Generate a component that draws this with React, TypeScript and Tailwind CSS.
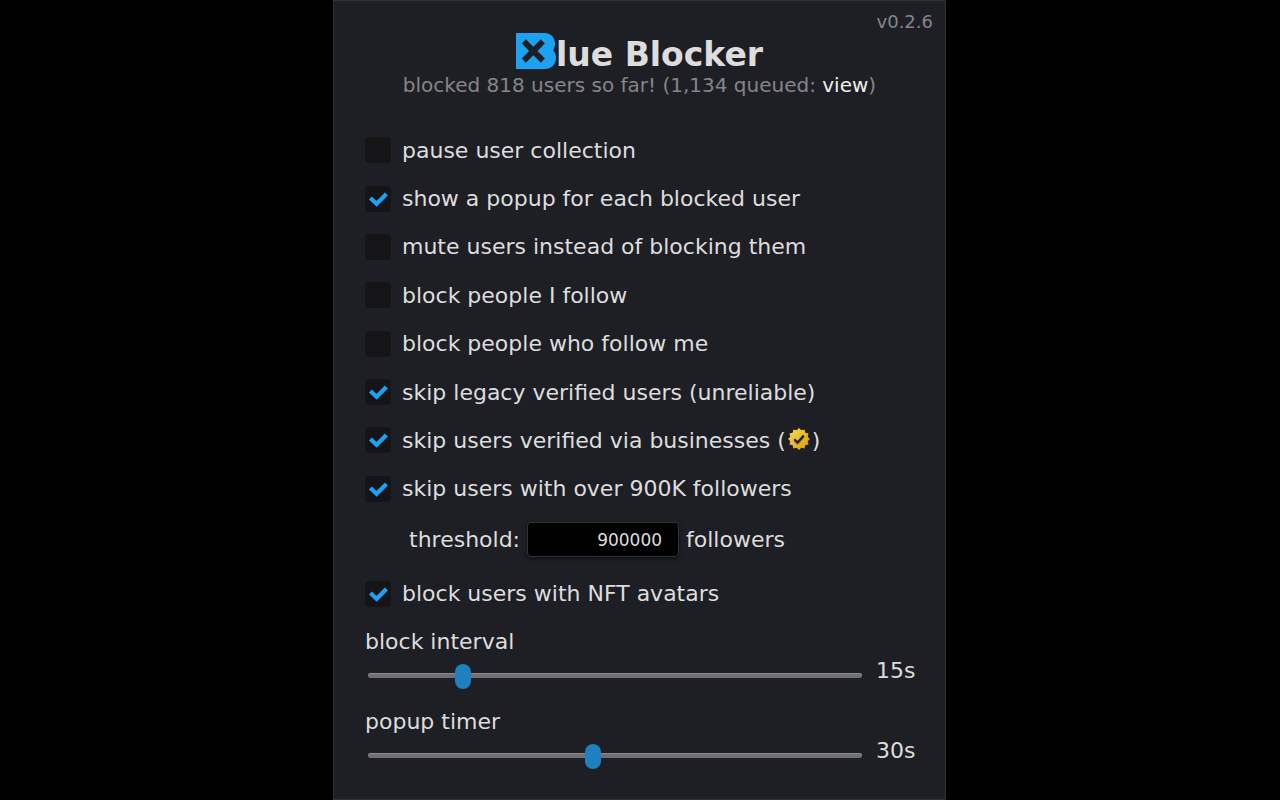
import { useState } from "react";
import type { ReactNode } from "react";

function Logo() {
  return (
    <svg width="40" height="36" viewBox="0 0 41 36" preserveAspectRatio="none" aria-hidden="true" className="shrink-0">
      <path
        d="M0 0H29C35.5 0 40 4.5 40 10.5C40 13 39.4 15.2 38 17.3C40 19 41 21.6 41 24.7C41 31.5 36 36 29.5 36H0Z"
        fill="#1da1f2"
      />
      <path d="M8 8.4L27.5 27.6M27.5 8.4L8 27.6" stroke="#1e1f25" strokeWidth="6" />
    </svg>
  );
}

function GoldBadge() {
  const points = Array.from({ length: 24 }, (_, i) => {
    const radius = i % 2 === 0 ? 11 : 9;
    const angle = (i * Math.PI) / 12 - Math.PI / 2;
    return `${(11 + radius * Math.cos(angle)).toFixed(2)},${(11 + radius * Math.sin(angle)).toFixed(2)}`;
  }).join(" ");
  return (
    <svg width="22" height="22" viewBox="0 0 22 22" role="img" aria-label="gold check" className="mx-0.5 mb-1.5 inline-block align-middle">
      <defs>
        <linearGradient id="gold" x1="0" y1="0" x2="1" y2="1">
          <stop offset="0" stopColor="#f4e05c" />
          <stop offset="0.5" stopColor="#e9bd28" />
          <stop offset="1" stopColor="#cf9a12" />
        </linearGradient>
      </defs>
      <polygon points={points} fill="url(#gold)" />
      <path d="M6.2 12.6L9.6 15.8L15.8 8.8" stroke="#b57c10" strokeWidth="2" fill="none" />
      <path d="M6.2 11.2L9.6 14.4L15.8 7.4" stroke="#1e1f25" strokeWidth="2.2" fill="none" />
    </svg>
  );
}

function Option({ checked = false, children }: { checked?: boolean; children: ReactNode }) {
  return (
    <label className="flex w-fit cursor-pointer items-center gap-[11px]">
      <span className="grid size-[26px] shrink-0 place-items-center">
        <input
          type="checkbox"
          defaultChecked={checked}
          className="peer col-start-1 row-start-1 size-full appearance-none rounded bg-[#151517]"
        />
        <svg
          width="20"
          height="16"
          viewBox="0 0 20 16"
          aria-hidden="true"
          className="pointer-events-none invisible col-start-1 row-start-1 peer-checked:visible"
        >
          <path d="M2.4 7L8.6 12.8L18.4 3" stroke="#1da1f2" strokeWidth="4.2" fill="none" />
        </svg>
      </span>
      <span>{children}</span>
    </label>
  );
}

function Slider({ id, label, initial }: { id: string; label: string; initial: number }) {
  const [value, setValue] = useState(initial);
  return (
    <div>
      <label htmlFor={id} className="block leading-7">
        {label}
      </label>
      <div className="flex items-start">
        <input
          id={id}
          type="range"
          min={5}
          max={60}
          value={value}
          onChange={(e) => setValue(Number(e.target.value))}
          className="mx-[3px] mt-[7px] h-[25px] min-w-0 flex-1 cursor-pointer appearance-none bg-transparent [&::-webkit-slider-runnable-track]:h-[5px] [&::-webkit-slider-runnable-track]:rounded-[3px] [&::-webkit-slider-runnable-track]:bg-[#717175] [&::-webkit-slider-runnable-track]:shadow-[inset_0_1px_0_#8b8b8f] [&::-webkit-slider-thumb]:-mt-[9px] [&::-webkit-slider-thumb]:h-[25px] [&::-webkit-slider-thumb]:w-4 [&::-webkit-slider-thumb]:appearance-none [&::-webkit-slider-thumb]:rounded-lg [&::-webkit-slider-thumb]:bg-[#1f80bf]"
        />
        <output htmlFor={id} className="ml-[11px] w-[41px] leading-[30px]">
          {value}s
        </output>
      </div>
    </div>
  );
}

export default function App() {
  return (
    <div className="flex min-h-screen justify-center bg-black pr-px font-['DejaVu_Sans',sans-serif] text-[22px] text-[#dddddd]">
      <main className="w-full max-w-[613px] border border-[#2d333a] bg-[#1e1f25]">
        <header className="text-center">
          <p className="px-3 pt-[9px] text-right text-[18px] leading-[23px] text-[#858588]">v0.2.6</p>
          <h1 className="flex items-start justify-center text-[33px] leading-11 font-bold">
            <Logo />
            <span>lue Blocker</span>
          </h1>
          <p className="text-[20px] leading-4 text-[#858588]">
            blocked 818 users so far! (1,134 queued:{" "}
            <a href="#queue" className="text-[#eeeeee]">
              view
            </a>
            )
          </p>
        </header>
        <form className="mt-[33px] pr-7 pl-[31px]">
          <div className="grid h-[387px] grid-rows-8 items-center">
            <Option>pause user collection</Option>
            <Option checked>show a popup for each blocked user</Option>
            <Option>mute users instead of blocking them</Option>
            <Option>block people I follow</Option>
            <Option>block people who follow me</Option>
            <Option checked>skip legacy verified users (unreliable)</Option>
            <Option checked>
              skip users verified via businesses (<GoldBadge />)
            </Option>
            <Option checked>skip users with over 900K followers</Option>
          </div>
          <div className="mt-[9px] flex items-center gap-[7px] pl-11">
            <label htmlFor="threshold">threshold:</label>
            <input
              id="threshold"
              type="number"
              defaultValue={900000}
              className="h-[35px] w-[152px] appearance-none rounded border border-[#2d333a] bg-black px-4 text-right text-[17px] shadow-[0_2px_4px_rgba(0,0,0,0.5)] [&::-webkit-inner-spin-button]:appearance-none"
            />
            <span>followers</span>
          </div>
          <div className="mt-5">
            <Option checked>block users with NFT avatars</Option>
          </div>
          <div className="mt-[18px] flex flex-col gap-5">
            <Slider id="interval" label="block interval" initial={15} />
            <Slider id="timer" label="popup timer" initial={30} />
          </div>
        </form>
      </main>
    </div>
  );
}
